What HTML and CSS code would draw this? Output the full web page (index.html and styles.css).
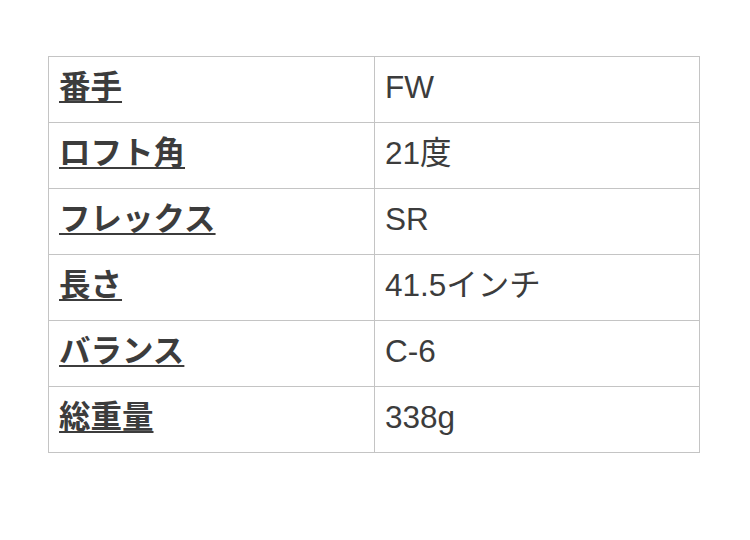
FILE: index.html
```html
<!DOCTYPE html>
<html lang="ja">
<head>
<meta charset="utf-8">
<title>スペック</title>
<link rel="stylesheet" href="styles.css">
</head>
<body>
<div class="wrap">
<table class="spec">
<tr><th><u>番手</u></th><td>FW</td></tr>
<tr><th><u>ロフト角</u></th><td>21度</td></tr>
<tr><th><u>フレックス</u></th><td>SR</td></tr>
<tr><th><u>長さ</u></th><td>41.5インチ</td></tr>
<tr><th><u>バランス</u></th><td>C-6</td></tr>
<tr><th><u>総重量</u></th><td>338g</td></tr>
</table>
</div>
</body>
</html>
```
FILE: styles.css
```css
html, body {
  margin: 0;
  padding: 0;
  background: #fff;
}
.wrap {
  padding: 56px 50px 0 48px;
}
.spec {
  width: 652px;
  border-collapse: collapse;
  table-layout: fixed;
  font-family: "Liberation Sans", "Noto Sans CJK JP", sans-serif;
  font-size: 31.5px;
  color: #3c3c3c;
}
.spec th,
.spec td {
  border: 1px solid #c4c4c4;
  height: 66px;
  padding: 0 10px 3px;
  box-sizing: border-box;
  text-align: left;
  vertical-align: middle;
  line-height: 1.2;
}
.spec th {
  width: 326px;
  font-weight: bold;
}
.spec th u {
  text-decoration-thickness: 2px;
  text-underline-offset: 3px;
}
.spec td {
  font-weight: normal;
}
```
